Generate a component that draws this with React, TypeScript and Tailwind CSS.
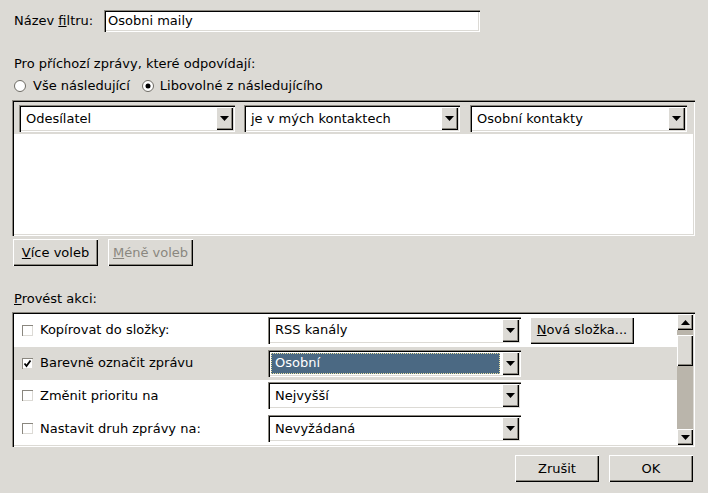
import React from 'react';

const SUNKEN = 'shadow-[inset_1px_1px_0_#8a877f,inset_2px_2px_0_#000,inset_-1px_-1px_0_#fff,inset_-2px_-2px_0_#dcdad5]';
const RAISED = 'shadow-[inset_1px_1px_0_#fff,inset_-1px_-1px_0_#000,inset_-2px_-2px_0_#8a877f]';

function Arrow({ up = false }: { up?: boolean }) {
  return (
    <svg width="9" height="5" viewBox="0 0 9 5" className="block">
      <polygon points={up ? '0,5 9,5 4.5,0' : '0,0 9,0 4.5,5'} fill="#000" />
    </svg>
  );
}

function Select({
  value,
  width,
  selected = false,
}: {
  value: string;
  width: string;
  selected?: boolean;
}) {
  return (
    <div className={`${width} h-[27px] bg-white flex p-[2px] ${SUNKEN}`}>
      <div className="flex-1 flex items-center min-w-0 p-[1px]">
        <div
          className={`h-full w-full flex items-center pl-[4px] ${
            selected ? 'bg-[#4b6983] text-white outline-1 outline-dotted outline-[#e8e0a0] -outline-offset-1' : ''
          }`}
        >
          {value}
        </div>
      </div>
      <div className={`w-[17px] ml-[1px] bg-[#dcdad5] flex items-center justify-center ${RAISED}`}>
        <Arrow />
      </div>
    </div>
  );
}

function Button({
  children,
  width,
  disabled = false,
}: {
  children: React.ReactNode;
  width: string;
  disabled?: boolean;
}) {
  return (
    <div
      className={`${width} h-[27px] bg-[#dcdad5] flex items-center justify-center ${RAISED} ${
        disabled ? 'text-[#8a877f]' : 'text-black'
      }`}
    >
      {children}
    </div>
  );
}

function Checkbox({ checked = false }: { checked?: boolean }) {
  return (
    <div className="w-[11px] h-[11px] bg-white shadow-[inset_1px_1px_0_#8a877f,inset_-1px_-1px_0_#dcdad5] flex items-center justify-center">
      {checked && (
        <svg width="9" height="9" viewBox="0 0 9 9" className="block">
          <path d="M1.5 4.5 L3.5 7 L7.5 1.5" stroke="#000" strokeWidth="1.8" fill="none" />
        </svg>
      )}
    </div>
  );
}

function Radio({ checked = false }: { checked?: boolean }) {
  return (
    <svg width="12" height="12" viewBox="0 0 12 12" className="block">
      <circle cx="6" cy="6" r="5.5" fill="#fff" stroke="#6e6b64" strokeWidth="1" />
      {checked && <circle cx="6" cy="6" r="2.5" fill="#000" />}
    </svg>
  );
}

function Scrollbar() {
  return (
    <div className="w-[16px] h-full bg-[#bab5ab] flex flex-col">
      <div className={`h-[16px] bg-[#dcdad5] flex items-center justify-center ${RAISED}`}>
        <Arrow up />
      </div>
      <div className={`h-[31px] mt-[5px] bg-[#dcdad5] ${RAISED}`} />
      <div className="flex-1" />
      <div className={`h-[16px] bg-[#dcdad5] flex items-center justify-center ${RAISED}`}>
        <Arrow />
      </div>
    </div>
  );
}

const ACTIONS = [
  { label: 'Kopírovat do složky:', value: 'RSS kanály', checked: false, button: true },
  { label: 'Barevně označit zprávu', value: 'Osobní', checked: true, selected: true },
  { label: 'Změnit prioritu na', value: 'Nejvyšší', checked: false },
  { label: 'Nastavit druh zprávy na:', value: 'Nevyžádaná', checked: false },
];

export default function App() {
  return (
    <div
      className="w-[708px] h-[493px] bg-[#dcdad5] text-black text-[13px] leading-[16px] flex flex-col pl-[12px] overflow-hidden"
      style={{ fontFamily: '"DejaVu Sans", Verdana, sans-serif' }}
    >
      {/* Filter name */}
      <div className="flex items-center mt-[10px] h-[22px]">
        <span className="ml-[2px] w-[90px]">
          Název <span className="underline">f</span>iltru:
        </span>
        <div className={`w-[376px] h-[22px] bg-white flex items-center pl-[4px] ${SUNKEN}`}>Osobni maily</div>
      </div>

      <div className="mt-[24px] ml-[2px]">Pro příchozí zprávy, které odpovídají:</div>

      <div className="mt-[6px] ml-[2px] flex items-center h-[16px]">
        <Radio />
        <span className="ml-[7px]">Vše následující</span>
        <span className="ml-[12px]">
          <Radio checked />
        </span>
        <span className="ml-[6px]">Libovolné z následujícího</span>
      </div>

      {/* Conditions */}
      <div className={`mt-[6px] w-[683px] h-[136px] bg-white p-[2px] ${SUNKEN}`}>
        <div className="bg-[#dcdad5] h-[32px] flex items-center pl-[5px] pt-[1px]">
          <Select value="Odesílatel" width="w-[216px]" />
          <div className="w-[9px]" />
          <Select value="je v mých kontaktech" width="w-[216px]" />
          <div className="w-[10px]" />
          <Select value="Osobní kontakty" width="w-[217px]" />
        </div>
      </div>

      <div className="flex mt-[3px] ml-[1px] gap-[10px]">
        <Button width="w-[85px]">
          <span>
            <span className="underline">V</span>íce voleb
          </span>
        </Button>
        <Button width="w-[85px]" disabled>
          <span>
            <span className="underline">M</span>éně voleb
          </span>
        </Button>
      </div>

      <div className="mt-[25px] ml-[2px]">
        <span className="underline">P</span>rovést akci:
      </div>

      {/* Actions */}
      <div className={`mt-[5px] w-[683px] h-[135px] bg-white p-[2px] flex ${SUNKEN}`}>
        <div className="flex-1 flex flex-col">
          {ACTIONS.map((a, i) => (
            <div
              key={i}
              className={`h-[33px] flex items-center ${a.selected ? 'bg-[#dcdad5]' : 'bg-white'}`}
            >
              <div className="ml-[8px]">
                <Checkbox checked={a.checked} />
              </div>
              <span className="ml-[7px] w-[228px]">{a.label}</span>
              <Select value={a.value} width="w-[253px]" selected={a.selected} />
              {a.button && (
                <div className="ml-[9px]">
                  <Button width="w-[104px]">
                    <span>
                      <span className="underline">N</span>ová složka...
                    </span>
                  </Button>
                </div>
              )}
            </div>
          ))}
        </div>
        <Scrollbar />
      </div>

      <div className="flex justify-end gap-[10px] mt-[8px] w-[681px]">
        <Button width="w-[84px]">Zrušit</Button>
        <Button width="w-[84px]">OK</Button>
      </div>
    </div>
  );
}
